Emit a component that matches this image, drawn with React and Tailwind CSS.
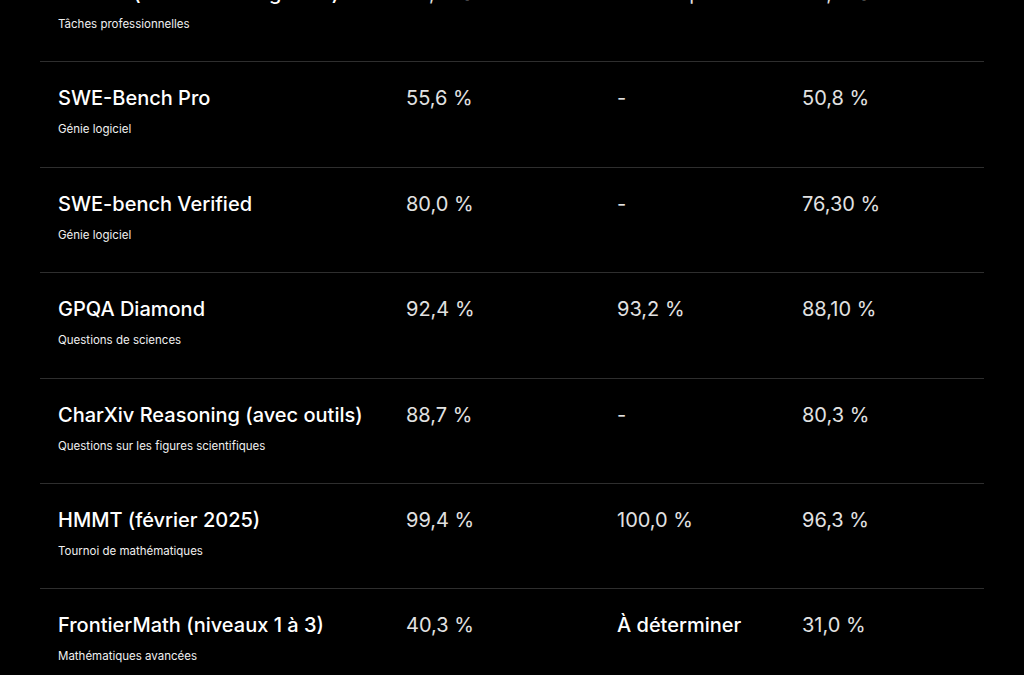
import React from "react";

const rows = [
  { t: "GDPval (victoires ou égalités)", s: "Tâches professionnelles", a: "70,9 %", b: "Non disponible", c: "38,8 %" },
  { t: "SWE-Bench Pro", s: "Génie logiciel", a: "55,6 %", b: "-", c: "50,8 %" },
  { t: "SWE-bench Verified", s: "Génie logiciel", a: "80,0 %", b: "-", c: "76,30 %" },
  { t: "GPQA Diamond", s: "Questions de sciences", a: "92,4 %", b: "93,2 %", c: "88,10 %" },
  { t: "CharXiv Reasoning (avec outils)", s: "Questions sur les figures scientifiques", a: "88,7 %", b: "-", c: "80,3 %" },
  { t: "HMMT (février 2025)", s: "Tournoi de mathématiques", a: "99,4 %", b: "100,0 %", c: "96,3 %" },
  { t: "FrontierMath (niveaux 1 à 3)", s: "Mathématiques avancées", a: "40,3 %", b: "À déterminer", c: "31,0 %", bStrong: true },
];

export default function App() {
  return (
    <div className="h-[675px] w-[1024px] overflow-hidden bg-black text-white" style={{ fontFamily: "Inter, 'Liberation Sans', sans-serif" }}>
      <div className="mx-[40px] -mt-[43px]">
        {rows.map((r, i) => (
          <div key={i} className={`grid h-[105.4px] grid-cols-[348px_211px_185px_1fr] ${i < rows.length - 1 ? "border-b border-[#2e2e2e]" : ""}`}>
            <div className="pl-[18px] pt-[22px]">
              <div className="text-[20px] font-medium leading-[28px] text-white">{r.t}</div>
              <div className="mt-[9px] text-[11.5px] leading-[16px] text-[#f0f0f0]">{r.s}</div>
            </div>
            <div className="pl-[18px] pt-[22px] text-[20px] leading-[28px] text-[#e2e2e2]">{r.a}</div>
            <div className={`pl-[18px] pt-[22px] text-[20px] leading-[28px] ${r.bStrong ? "font-medium text-white" : "text-[#e2e2e2]"}`}>{r.b}</div>
            <div className="pl-[18px] pt-[22px] text-[20px] leading-[28px] text-[#e2e2e2]">{r.c}</div>
          </div>
        ))}
      </div>
    </div>
  );
}
